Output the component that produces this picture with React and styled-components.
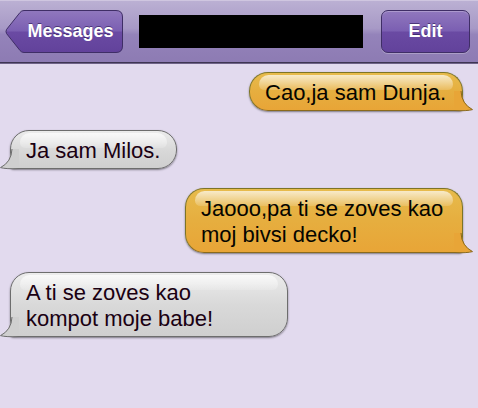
import React from "react";
import styled, { createGlobalStyle, css } from "styled-components";

const GlobalStyle = createGlobalStyle`
  html, body {
    margin: 0;
    padding: 0;
    background: #e2daee;
  }
  body {
    font-family: "Liberation Sans", Arial, Helvetica, sans-serif;
  }
`;

const Screen = styled.div`
  width: 478px;
  height: 408px;
  overflow: hidden;
  background: #e2daee;
`;

const NavBar = styled.div`
  display: flex;
  align-items: center;
  height: 63px;
  padding-left: 5px;
  box-sizing: border-box;
  background: linear-gradient(#bbb0d3 0%, #a799c6 45%, #9483ba 55%, #8d7bb3 100%);
  border-top: 1px solid #cfc6e0;
  border-bottom: 1px solid #3e3552;
  box-shadow: 0 1px 0 #6f6388;
`;

const BackButton = styled.div`
  position: relative;
  width: 118px;
  height: 43px;
  flex: none;

  svg {
    position: absolute;
    inset: 0;
  }
`;

const ButtonLabel = styled.span`
  position: relative;
  display: flex;
  align-items: center;
  justify-content: center;
  height: 100%;
  padding-left: ${(p) => (p.$back ? "13px" : "0")};
  color: #fff;
  font-size: 18px;
  font-weight: bold;
  text-shadow: 0 -1px 0 rgba(40, 20, 80, 0.6);
`;

const TitleBlock = styled.div`
  width: 224px;
  height: 33px;
  margin-left: 16px;
  background: #000;
  flex: none;
`;

const EditButton = styled.div`
  width: 89px;
  height: 43px;
  margin-left: 18px;
  box-sizing: border-box;
  border: 1px solid #3f2e66;
  border-radius: 7px;
  background: linear-gradient(#9078be 0%, #7b5fb2 48%, #6a4aa3 52%, #62429b 100%);
  box-shadow: 0 1px 0 rgba(255, 255, 255, 0.25), inset 0 1px 0 rgba(255, 255, 255, 0.25);
  flex: none;
`;

const Thread = styled.div`
  display: flex;
  flex-direction: column;
  gap: 19px;
  padding-top: 9px;
`;

const themes = {
  mine: css`
    align-self: flex-end;
    margin-right: 15px;
    color: #050500;
    border: 1px solid #7d7426;
    border-bottom-color: #8a6a1c;
    border-bottom-right-radius: 4px;
    background: linear-gradient(#e7bb4c 0%, #e6ae3f 50%, #e8a537 100%);
  `,
  theirs: css`
    align-self: flex-start;
    margin-left: 10px;
    color: #1a0012;
    border: 1px solid #6d6d6d;
    border-bottom-left-radius: 4px;
    background: linear-gradient(#ececec 0%, #d9d9d9 50%, #cfcfcf 100%);
  `,
};

const Bubble = styled.div`
  position: relative;
  box-sizing: border-box;
  width: ${(p) => (p.$wide ? "278px" : "auto")};
  padding: 7px 16px 4px 15px;
  border-radius: 19px;
  font-size: 22px;
  line-height: 26px;
  white-space: nowrap;
  box-shadow: 0 1px 2px rgba(0, 0, 0, 0.45);
  ${(p) => themes[p.$side]}

  &::before {
    content: "";
    position: absolute;
    top: 2px;
    left: 9px;
    right: 9px;
    height: 42%;
    max-height: 15px;
    border-radius: 14px 14px 8px 8px;
    background: linear-gradient(rgba(255, 255, 255, 0.7), rgba(255, 255, 255, 0.15));
  }
`;

const Text = styled.span`
  position: relative;
`;

const TailSvg = styled.svg`
  position: absolute;
  bottom: -1px;
  ${(p) => (p.$side === "mine" ? "right: -12px;" : "left: -12px; transform: scaleX(-1);")}
  overflow: visible;
`;

function Tail({ side }) {
  const fill = side === "mine" ? "#e8a537" : "#cfcfcf";
  const stroke = side === "mine" ? "#8a6a1c" : "#6d6d6d";
  return (
    <TailSvg $side={side} width="14" height="20" viewBox="0 0 14 20">
      <path d="M0 0 L1.5 0 Q2 13 12.5 18.6 Q7 20.2 -6 19.5 L-6 0 Z" fill={fill} />
      <path d="M1 0 Q1.5 13 12.5 18.6 Q7 20.2 -6 19.5" fill="none" stroke={stroke} strokeWidth="1" />
    </TailSvg>
  );
}

function Message({ side, lines }) {
  return (
    <Bubble $side={side} $wide={lines.length > 1}>
      <Text>
        {lines.map((line, i) => (
          <React.Fragment key={i}>
            {i > 0 && <br />}
            {line}
          </React.Fragment>
        ))}
      </Text>
      <Tail side={side} />
    </Bubble>
  );
}

const messages = [
  { side: "mine", lines: ["Cao,ja sam Dunja."] },
  { side: "theirs", lines: ["Ja sam Milos."] },
  { side: "mine", lines: ["Jaooo,pa ti se zoves kao", "moj bivsi decko!"] },
  { side: "theirs", lines: ["A ti se zoves kao", "kompot moje babe!"] },
];

export default function App() {
  return (
    <Screen>
      <GlobalStyle />
      <NavBar>
        <BackButton>
          <svg width="118" height="43" viewBox="0 0 118 43">
            <defs>
              <linearGradient id="backFill" x1="0" y1="0" x2="0" y2="1">
                <stop offset="0" stopColor="#9078be" />
                <stop offset="0.48" stopColor="#7b5fb2" />
                <stop offset="0.52" stopColor="#6a4aa3" />
                <stop offset="1" stopColor="#62429b" />
              </linearGradient>
            </defs>
            <path
              d="M19 0.5 L111 0.5 Q117.5 0.5 117.5 7 L117.5 36 Q117.5 42.5 111 42.5 L19 42.5 Q16.5 42.5 15 40.5 L1.5 23.5 Q0.5 21.5 1.5 19.5 L15 2.5 Q16.5 0.5 19 0.5 Z"
              fill="url(#backFill)"
              stroke="#3f2e66"
            />
          </svg>
          <ButtonLabel $back>Messages</ButtonLabel>
        </BackButton>
        <TitleBlock />
        <EditButton>
          <ButtonLabel>Edit</ButtonLabel>
        </EditButton>
      </NavBar>
      <Thread>
        {messages.map((m, i) => (
          <Message key={i} side={m.side} lines={m.lines} />
        ))}
      </Thread>
    </Screen>
  );
}
